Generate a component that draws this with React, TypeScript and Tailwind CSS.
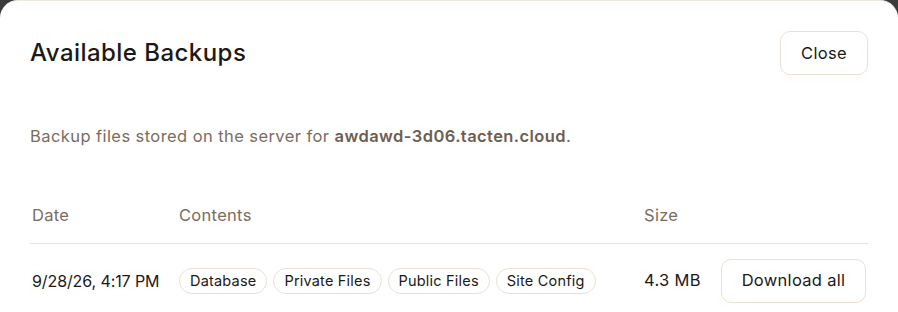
const chips = ["Database", "Private Files", "Public Files", "Site Config"];

export default function App() {
  return (
    <div
      className="h-[312px] w-[898px] overflow-hidden bg-[#3b3b3b]"
      style={{ fontFamily: "Inter, 'Noto Sans', sans-serif" }}
    >
      <div className="h-full rounded-t-[18px] border-t border-[#efe9e2] bg-white px-[30px]">
        <div className="flex items-center justify-between pt-[30px]">
          <h2 className="text-[24px] font-medium tracking-[0.45px] text-[#1c1917]">
            Available Backups
          </h2>
          <button className="h-[44px] w-[88px] rounded-[10px] border border-[#ebe0d3] bg-white text-[16.5px] tracking-[0.3px] text-[#1c1917]">
            Close
          </button>
        </div>

        <p className="mt-[49px] text-[16.5px] tracking-[0.42px] text-[#7b6c60]">
          Backup files stored on the server for{" "}
          <span className="font-semibold text-[#6e5e52]">awdawd-3d06.tacten.cloud</span>.
        </p>

        <div className="mt-[39px] text-[16.5px] tracking-[0.3px]">
          <div className="grid h-[56px] grid-cols-[149px_465px_76px_1fr] items-center border-b border-[#ece3d8] text-[#7b6c60]">
            <div className="pl-[2px]">Date</div>
            <div>Contents</div>
            <div>Size</div>
            <div />
          </div>
          <div className="grid h-[74px] grid-cols-[149px_465px_76px_1fr] items-center text-[#1c1917]">
            <div className="pl-[2px] text-[16px] tracking-[-0.1px]">9/28/26, 4:17 PM</div>
            <div className="flex gap-[6px]">
              {chips.map((c) => (
                <span
                  key={c}
                  className="rounded-full border border-[#ebe0d3] px-[10px] py-[1px] text-[14.5px] tracking-[0.2px] text-[#1c1917]"
                >
                  {c}
                </span>
              ))}
            </div>
            <div>4.3 MB</div>
            <div className="flex justify-end">
              <button className="mr-[2px] h-[44px] w-[145px] rounded-[10px] border border-[#ebe0d3] bg-white text-[16.5px] text-[#1c1917]">
                Download all
              </button>
            </div>
          </div>
        </div>
      </div>
    </div>
  );
}
